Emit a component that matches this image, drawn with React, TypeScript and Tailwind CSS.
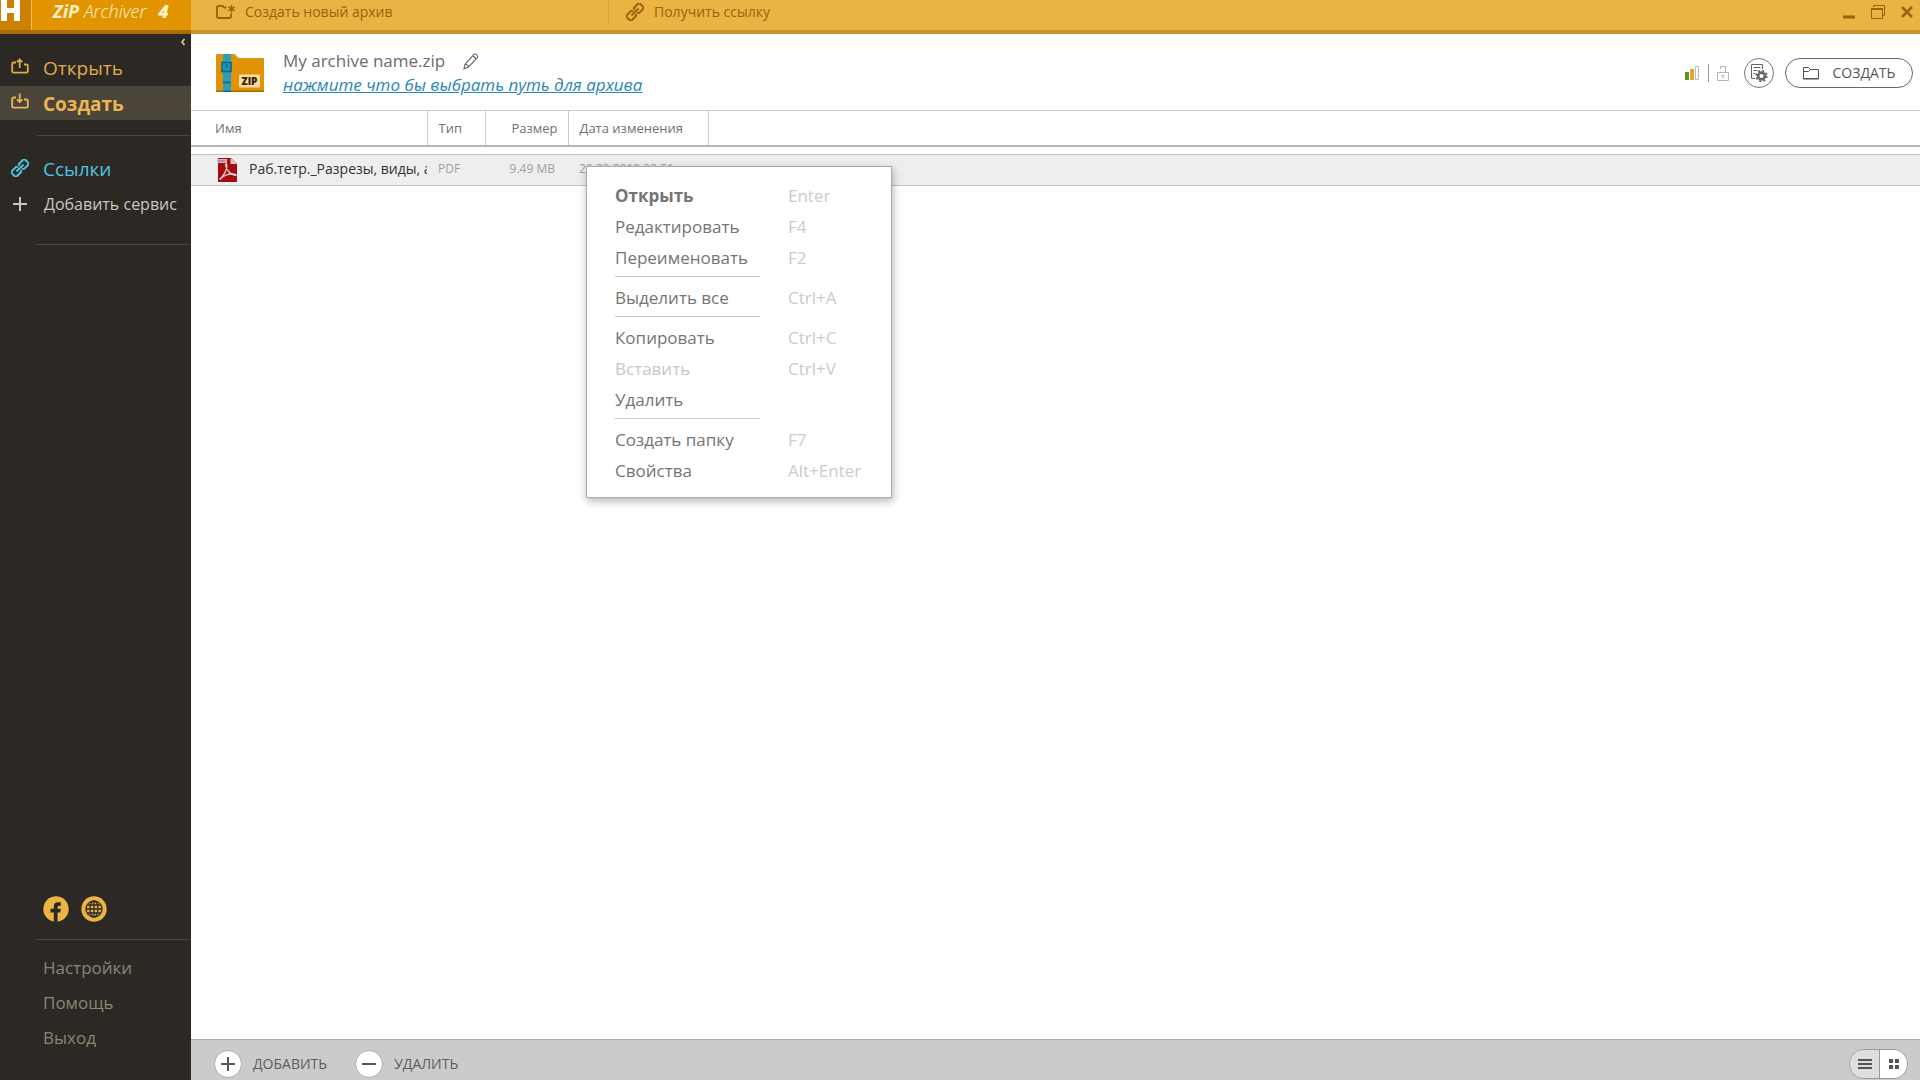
import React, { useState } from 'react';

type MenuItem = { label: string; keys?: string; bold?: boolean; disabled?: boolean; line?: boolean };

const menuItems: MenuItem[] = [
  { label: 'Открыть', keys: 'Enter', bold: true },
  { label: 'Редактировать', keys: 'F4' },
  { label: 'Переименовать', keys: 'F2', line: true },
  { label: 'Выделить все', keys: 'Ctrl+A', line: true },
  { label: 'Копировать', keys: 'Ctrl+C' },
  { label: 'Вставить', keys: 'Ctrl+V', disabled: true },
  { label: 'Удалить', line: true },
  { label: 'Создать папку', keys: 'F7' },
  { label: 'Свойства', keys: 'Alt+Enter' },
];

const ChainIcon = ({ className }: { className?: string }) => (
  <svg className={className} width="18" height="18" viewBox="0 0 20 20" fill="none" stroke="currentColor" strokeWidth="2.2">
    <g transform="rotate(-45 10 10)">
      <path d="M8.500 8V7.500Q8.500 6 7 6H1Q-.5 6-.5 7.500v5Q-.5 14 1 14h6q1.500 0 1.500-1.500V12" />
      <path d="M11.500 8V7.500Q11.500 6 13 6h6q1.500 0 1.500 1.500v5q0 1.500-1.500 1.500h-6q-1.500 0-1.500-1.500V12" />
      <path d="M4.500 10h11" />
    </g>
  </svg>
);

const TrayIcon = ({ down }: { down?: boolean }) => (
  <svg className="mb-1" width="18" height="18" viewBox="0 0 18 18" fill="none" stroke="currentColor" strokeWidth="1.8">
    <path d="M5 4.500H2.600Q1.200 4.500 1.200 5.900v7.200q0 1.600 1.600 1.600h12.400q1.600 0 1.600-1.600V7.900q0-1.400-1.400-1.400H13" />
    {down ? <path d="M8.700.5V9M6 6.300L8.700 9l2.700-2.700" /> : <path d="M8.700 10V1.500M6 4.200l2.700-2.700 2.700 2.700" />}
  </svg>
);

const NewArchiveIcon = () => (
  <svg width="20" height="16" viewBox="0 0 20 16" fill="none" stroke="currentColor" strokeWidth="1.8">
    <path d="M10.500 3.500H8L6.500 2H2.400Q1 2 1 3.400v8.900q0 1.700 1.700 1.700h10.600q1.700 0 1.700-1.700V9.500" />
    <path d="M15.500 1v7.400M12.300 2.900l6.400 3.700M18.700 2.900l-6.400 3.700" strokeWidth="1.500" />
  </svg>
);

const ZipFolder = () => (
  <svg width="48" height="38" viewBox="0 0 48 38">
    <path d="M1 0h17.500l4 4H47q1 0 1 1v32q0 1-1 1H1q-1 0-1-1V1q0-1 1-1z" fill="#e09306" />
    <path d="M0 36.500h48V37q0 1-1 1H1q-1 0-1-1z" fill="#a86a00" />
    <path d="M7 0h8v38H7z" fill="#2e9cba" />
    <path d="M7 27.500h8v2H7z" fill="#13708f" />
    <path d="M7 36.500h8V38H7z" fill="#0f6d8c" />
    <rect x="6" y="8.500" width="9" height="9" fill="#2394b3" stroke="#0b6a8a" strokeWidth="1.600" />
    <path d="M10.500 10.500v3.500" stroke="#0b6a8a" strokeWidth="1.500" />
    <rect x="23" y="20.500" width="21" height="13" rx="1" fill="#fbdb9c" />
    <text x="33.500" y="30.500" textAnchor="middle" fontSize="10" fontWeight="800" fontFamily="Open Sans, sans-serif" fill="#33200a">ZIP</text>
  </svg>
);

const PencilIcon = () => (
  <svg width="16" height="17" viewBox="0 0 16 17" fill="none" stroke="#666" strokeWidth="1.1">
    <path d="M1 15.800l1-4.500L10.500 1.800q1.500-1.500 3.300 0t.3 3.200L5.600 14z" />
    <path d="M9.500 3.200q2.800.3 3.200 3M2 11.300q2.500.2 3.600 2.700" />
  </svg>
);

const PdfIcon = () => (
  <svg width="20" height="24" viewBox="0 0 20 24">
    <path d="M1 0h13l6 6v18H1z" fill="#a30d10" />
    <path d="M13.500 0v6H20z" fill="#e9c4c4" />
    <path d="M0 1h10v4H0z" fill="#cfb9b9" />
    <path d="M1.500 3h7" stroke="#8d6a6a" strokeWidth="1.500" strokeDasharray="2 1" />
    <path d="M2.500 21.500C7 18 10.500 11 9.800 6.500c-.4-1.500-1.500-.5-1.100 1.200C9.700 12.500 14 17 18.500 17.500c1 0 .5-1.300-1-1.500-4.500-.5-10 .8-15 5.500z" fill="none" stroke="#f6dede" strokeWidth="1.200" />
  </svg>
);

const FacebookIcon = () => (
  <svg width="26" height="26" viewBox="0 0 26 26">
    <circle cx="13" cy="13" r="12.700" fill="#ecb443" />
    <path d="M10.800 26v-9.500H7.500v-3.700h3.300v-2.300q0-4.300 4.300-4.300h2.700v3.500h-1.700q-1.500 0-1.500 1.500v1.600h3.200l-.5 3.700h-2.700V26z" fill="#2c2823" />
  </svg>
);

const GlobeIcon = () => (
  <svg width="26" height="26" viewBox="0 0 26 26">
    <circle cx="13" cy="13" r="12.700" fill="#ecb443" />
    <g fill="none" stroke="#2c2823" strokeWidth="1.300">
      <circle cx="13" cy="13" r="8" />
      <ellipse cx="13" cy="13" rx="4" ry="8" />
      <path d="M13 5v16M5 13h16M6.500 9h13M6.500 17h13" />
    </g>
  </svg>
);

const ReportGearIcon = () => (
  <svg width="18" height="20" viewBox="0 0 18 20" fill="none" stroke="#666">
    <path d="M5 15.500H1.500v-14h11V6M3.500 4.500h7M3.500 7.500h4M3.500 10.500h2" />
    <circle cx="11.500" cy="13" r="3.400" strokeWidth="2.600" />
    <circle cx="11.500" cy="13" r="5.300" strokeWidth="1.600" strokeDasharray="2.160 2" />
  </svg>
);

const NavLine = () => <div className="ml-[37px] h-px shrink-0 bg-[#4d483c]" />;

const Sidebar = () => (
  <aside className="flex w-[191px] shrink-0 flex-col bg-[#2c2823]">
    <div className="flex h-[17px] justify-end">
      <button aria-label="Свернуть панель" className="h-4 w-3 text-[#f0d48c]">
        <svg width="8" height="8" viewBox="0 0 8 8" fill="none" stroke="currentColor" strokeWidth="1.5"><path d="M5.500 1L3 4l2.500 3" /></svg>
      </button>
    </div>
    <nav className="flex flex-col">
      <a href="#open" className="flex h-[35px] items-center gap-3.5 pl-[11px] text-[19px] text-[#e0ab4a]">
        <TrayIcon />Открыть
      </a>
      <a href="#create" className="flex h-[34px] items-center gap-3.5 bg-[#4a443a] pt-0.5 pl-[11px] text-[19px] font-bold text-[#ecb552]">
        <TrayIcon down />Создать
      </a>
      <div className="py-[15px]"><NavLine /></div>
      <a href="#links" className="flex h-9 items-center gap-3.5 pl-[11px] text-[19px] text-[#4fc3e0]">
        <ChainIcon className="mb-0.5" />Ссылки
      </a>
      <a href="#service" className="flex h-[33px] items-center gap-4 pl-3 text-base whitespace-nowrap text-[#c9c6c2]">
        <svg width="16" height="16" viewBox="0 0 16 16" stroke="currentColor" strokeWidth="2"><path d="M8 1v14M1 8h14" /></svg>
        Добавить сервис
      </a>
      <div className="pt-6"><NavLine /></div>
    </nav>
    <div className="mt-auto flex gap-3 pb-[17px] pl-[43px]">
      <a href="#facebook" aria-label="Facebook"><FacebookIcon /></a>
      <a href="#site" aria-label="Сайт"><GlobeIcon /></a>
    </div>
    <NavLine />
    <div className="flex flex-col pt-2.5 pb-6 pl-[43px] text-[17px] text-[#8d8474]">
      <a href="#settings" className="flex h-[35px] items-center">Настройки</a>
      <a href="#help" className="flex h-[35px] items-center">Помощь</a>
      <a href="#exit" className="flex h-9 items-center">Выход</a>
    </div>
  </aside>
);

const TitleBar = () => (
  <header className="flex h-[34px] shrink-0 text-[#9a6209]">
    <div className="flex w-[191px] shrink-0 border-b-4 border-[#a86e0c] bg-[#e29400]">
      <div className="w-8 border-r border-[#f0c060] bg-[#cc8200]">
        <svg width="21" height="22" viewBox="0 0 21 22"><path d="M1 0h6v8h7V0h6v21h-6v-8H7v8H1z" fill="#fff" /></svg>
      </div>
      <div className="flex h-[22px] items-center gap-3 pl-[21px] text-lg leading-[22px] text-[#fff0c8] italic">
        <span><b>ZiP</b> <span className="font-light">Archiver</span></span>
        <b className="font-extrabold">4</b>
      </div>
    </div>
    <div className="flex flex-1 border-b-4 border-[#c8952c] bg-[#ebb344] text-sm">
      <button className="flex h-6 w-[418px] items-center gap-[9px] border-r border-[#d9a034] pl-[25px]">
        <NewArchiveIcon />Создать новый архив
      </button>
      <button className="flex h-6 items-center gap-2.5 pl-[17px]">
        <ChainIcon />Получить ссылку
      </button>
      <div className="ml-auto flex h-6 items-center gap-[15px] pr-1.5">
        <button aria-label="Свернуть">
          <svg width="14" height="16" viewBox="0 0 14 16"><path d="M1 11.500h12v3H1z" fill="currentColor" /></svg>
        </button>
        <button aria-label="Развернуть">
          <svg width="14" height="16" viewBox="0 0 14 16" fill="none" stroke="currentColor"><path d="M2.500 3V1.500h11v10H12" /><path d="M.5 4.500h11v10H.5z" /><path d="M.5 5h11" strokeWidth="2" /></svg>
        </button>
        <button aria-label="Закрыть">
          <svg width="14" height="16" viewBox="0 0 14 16" stroke="currentColor" strokeWidth="2.500"><path d="M2 3l10 10M12 3L2 13" /></svg>
        </button>
      </div>
    </div>
  </header>
);

const ArchiveHeader = () => (
  <div className="flex h-[76px] shrink-0 items-center pt-0.5 pr-[7px] pl-[25px]">
    <ZipFolder />
    <div className="ml-[19px] flex flex-col">
      <div className="flex h-6 items-center gap-[18px] text-[17px] text-[#6b6b6b]">
        My archive name.zip
        <button aria-label="Переименовать архив"><PencilIcon /></button>
      </div>
      <a href="#path" className="h-6 text-[17px] leading-6 text-[#2a86b8] italic underline">нажмите что бы выбрать путь для архива</a>
    </div>
    <div className="ml-auto flex items-center">
      <svg width="14" height="14" viewBox="0 0 14 14"><path d="M0 6h4v8H0z" fill="#5f921c" /><path d="M5 3h4v11H5z" fill="#e5a23a" /><path d="M10.500.5h3v13h-3z" fill="none" stroke="#bbb" /></svg>
      <div className="mr-2 ml-[9px] h-[18px] w-px bg-[#999]" />
      <svg width="12" height="15" viewBox="0 0 12 15" fill="none" stroke="#b5b5b5"><path d="M.5 6.500h11v8H.5zM3.500 6.500v-1M3.500 3V.5h5v6M4.500 9.500h3M6 9.500v3" /></svg>
      <button aria-label="Параметры архива" className="ml-[15px] flex size-[30px] items-center justify-center rounded-full border border-[#777]">
        <ReportGearIcon />
      </button>
      <button className="ml-[11px] flex h-[30px] w-32 items-center justify-center gap-3.5 rounded-full border border-[#666] text-sm text-[#555]">
        <svg width="16" height="14" viewBox="0 0 16 14" fill="none" stroke="currentColor"><path d="M.5 13V1.500h5l2 2h8V13z" /><path d="M.5 5.500h5l2-2M0 12.500h16" /></svg>
        СОЗДАТЬ
      </button>
    </div>
  </div>
);

const FileTable = () => (
  <table className="w-full table-fixed border-collapse text-left">
    <colgroup>
      <col className="w-[236px]" />
      <col className="w-[58px]" />
      <col className="w-[83px]" />
      <col className="w-[140px]" />
      <col />
    </colgroup>
    <thead className="text-[13px] text-[#707070]">
      <tr className="h-[35px] border-t border-b-2 border-t-[#ccc] border-b-[#b5b5b5]">
        <th className="border-r border-[#ccc] pt-0.5 pl-6 font-normal">Имя</th>
        <th className="border-r border-[#ccc] pt-0.5 pl-[11px] font-normal">Тип</th>
        <th className="border-r border-[#ccc] pt-0.5 pr-2.5 text-right font-normal">Размер</th>
        <th className="border-r border-[#ccc] pt-0.5 pl-[11px] font-normal">Дата изменения</th>
        <th aria-hidden="true"></th>
      </tr>
    </thead>
    <tbody className="text-xs text-[#a0a0a0]">
      <tr aria-hidden="true" className="h-[9px]"><td colSpan={5}></td></tr>
      <tr className="h-[31px] border-y border-[#c4c4c4] bg-[#eee]">
        <td className="pl-[26px] text-sm text-[#333]">
          <div className="flex items-center gap-3">
            <div className="shrink-0"><PdfIcon /></div>
            <span className="overflow-hidden pb-0.5 whitespace-nowrap">Раб.тетр._Разрезы, виды, а</span>
          </div>
        </td>
        <td className="pb-0.5 pl-[11px]">PDF</td>
        <td className="pr-[13px] pb-0.5 text-right">9.49 MB</td>
        <td className="pb-0.5 pl-[11px]">20.03.2019 03:51</td>
        <td></td>
      </tr>
    </tbody>
  </table>
);

const ContextMenu = () => (
  <div role="menu" className="absolute top-[132px] left-[395px] w-[306px] border border-[#aaa] bg-white pt-[13px] pb-[11px] pl-7 text-[17px] text-[#757575] shadow-[1px_3px_8px_rgba(0,0,0,0.3)]">
    {menuItems.map((item) => (
      <React.Fragment key={item.label}>
        <button
          role="menuitem"
          disabled={item.disabled}
          className={`flex h-[31px] w-full items-center text-left ${item.disabled ? 'text-[#c8c8c8]' : ''}`}
        >
          <span className={`w-[173px] ${item.bold ? 'font-bold' : ''}`}>{item.label}</span>
          <span className="text-[#cbcbcb]">{item.keys}</span>
        </button>
        {item.line && <div className="mt-[3px] mb-[5px] h-px w-[145px] bg-[#c8c8c8]" />}
      </React.Fragment>
    ))}
  </div>
);

const BottomBar = () => {
  const [view, setView] = useState('grid');

  return (
    <footer className="mt-auto flex h-[41px] shrink-0 items-center border-t border-[#aaa] bg-[#cbcbcb] pt-2 pr-3 pl-[23px] text-sm text-[#5c5c5c]">
      <button className="flex items-center gap-[11px]">
        <svg width="28" height="28" viewBox="0 0 28 28"><circle cx="14" cy="14" r="13.500" fill="#fff" stroke="#aaa" /><path d="M14 7v14M7 14h14" stroke="#555" strokeWidth="2" /></svg>
        ДОБАВИТЬ
      </button>
      <button className="ml-7 flex items-center gap-[11px]">
        <svg width="28" height="28" viewBox="0 0 28 28"><circle cx="14" cy="14" r="13.500" fill="#fff" stroke="#aaa" /><path d="M7 14h14" stroke="#555" strokeWidth="2" /></svg>
        УДАЛИТЬ
      </button>
      <div className="ml-auto flex h-[30px] w-[59px] overflow-hidden rounded-full border border-[#999]">
        <button aria-label="Список" onClick={() => setView('list')} className={`flex w-[30px] items-center justify-center border-r border-[#999] ${view === 'list' ? 'bg-white' : 'bg-[#dedede]'}`}>
          <svg width="14" height="10" viewBox="0 0 14 10" fill="#555"><path d="M0 0h14v2H0zM0 4h14v2H0zM0 8h14v2H0z" /></svg>
        </button>
        <button aria-label="Плитка" onClick={() => setView('grid')} className={`flex flex-1 items-center justify-center ${view === 'grid' ? 'bg-white' : 'bg-[#dedede]'}`}>
          <svg width="10" height="10" viewBox="0 0 10 10" fill="#555"><path d="M0 0h4v4H0zM6 0h4v4H6zM0 6h4v4H0zM6 6h4v4H6z" /></svg>
        </button>
      </div>
    </footer>
  );
};

export default function App() {
  return (
    <div className="flex h-screen flex-col overflow-hidden bg-white font-['Open_Sans','Noto_Sans',sans-serif]">
      <TitleBar />
      <div className="flex min-h-0 flex-1">
        <Sidebar />
        <main className="relative flex min-w-0 flex-1 flex-col">
          <ArchiveHeader />
          <FileTable />
          <ContextMenu />
          <BottomBar />
        </main>
      </div>
    </div>
  );
}
